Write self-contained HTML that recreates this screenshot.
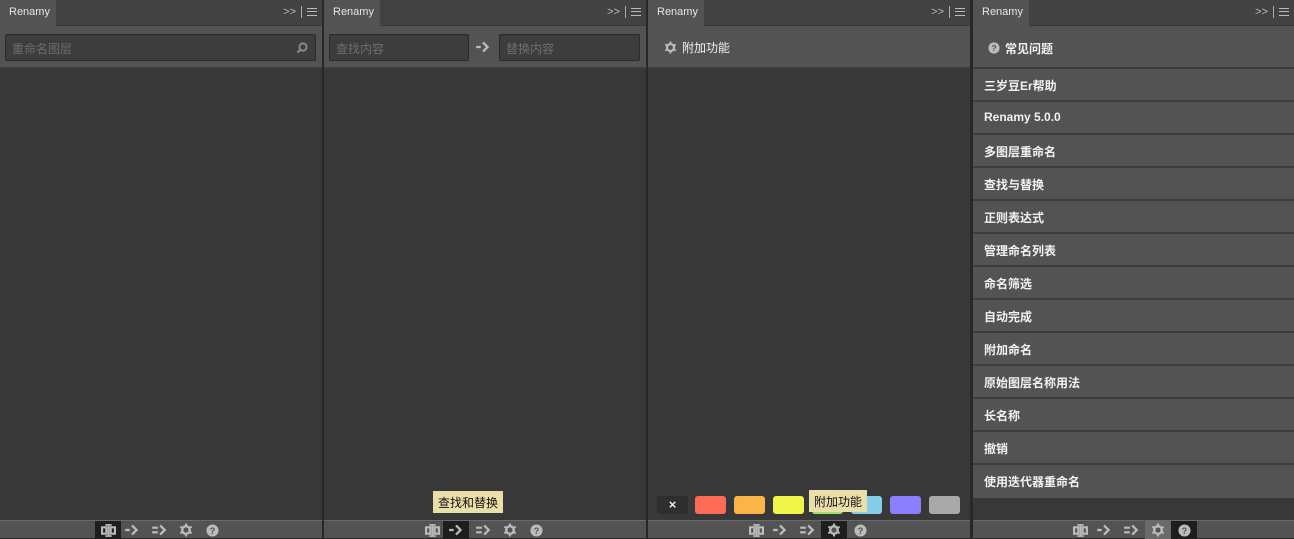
<!DOCTYPE html>
<html><head><meta charset="utf-8"><style>
*{margin:0;padding:0;box-sizing:border-box}
body{width:1294px;height:538px;background:#282828;position:relative;overflow:hidden;font-family:"Liberation Sans","Noto Sans CJK SC",sans-serif;font-size:12px;color:#ddd}
.p{position:absolute;top:0;height:538px;width:322px;background:#383838}
.tb{position:absolute;left:0;top:0;right:0;height:26px;background:#424242;border-bottom:1px solid #383838}
.tab{position:absolute;left:0;top:0;width:56px;height:27px;background:#535353;color:#e6e6e6;font-size:11px;padding:6px 0 0 9px}
.ctl{position:absolute;right:5px;top:6px;color:#bbb;font-size:11px;display:flex;align-items:center;gap:5px}
.ctl .bar{width:1px;height:12px;background:#aaa}
.mn{width:10px;height:8px;border-top:1.5px solid #bbb;border-bottom:1.5px solid #bbb;position:relative}
.mn:after{content:"";position:absolute;left:0;right:0;top:2px;border-top:1.5px solid #bbb}
.hd{position:absolute;left:0;right:0;top:26px;height:43px;background:#535353;border-bottom:2px solid #3c3c3c}
.in{position:absolute;top:8px;height:27px;background:#3d3d3d;border:1px solid #2a2a2a;border-radius:2px;color:#6e6e6e;font-size:12px;padding:5px 0 0 6px}
.bb{position:absolute;left:0;right:0;bottom:0;height:18px;background:#535353;border-top:1px solid #6a6a6a}
.ic{position:absolute;top:0;width:26px;height:18px;display:flex;align-items:center;justify-content:center}
.tip{position:absolute;background:#eadfa8;color:#111;font-size:12px;height:22px;padding:3px 5px 0}
.li{position:absolute;left:0;right:0;height:33px;background:#535353;border-bottom:2px solid #3c3c3c;color:#f2f2f2;font-weight:bold;font-size:12px;padding:8px 0 0 11px}
.sw{position:absolute;top:496px;width:31px;height:18px;border-radius:3px}
</style></head><body>

<svg width="0" height="0" style="position:absolute">
<defs>
<symbol id="ib" viewBox="0 0 14 12"><path d="M1 3h4v6H1zM9 3h4v6H9z" fill="none" stroke="#bbb" stroke-width="2"/><path d="M7 0v12M4 0.8h6M4 11.2h6" stroke="#bbb" stroke-width="1.6"/></symbol>
<symbol id="ar" viewBox="0 0 14 12"><path d="M1 6h4" stroke="#bbb" stroke-width="2"/><path d="M7 2l4 4-4 4" fill="none" stroke="#bbb" stroke-width="2"/></symbol>
<symbol id="ar2" viewBox="0 0 14 12"><path d="M1 4h5M1 8h5" stroke="#bbb" stroke-width="1.8"/><path d="M8 2l4 4-4 4" fill="none" stroke="#bbb" stroke-width="2"/></symbol>
<symbol id="gr" viewBox="0 0 14 14"><g fill="#bbb"><circle cx="7" cy="7" r="5"/><rect x="6" y="0.5" width="2" height="13"/><rect x="6" y="0.5" width="2" height="13" transform="rotate(60 7 7)"/><rect x="6" y="0.5" width="2" height="13" transform="rotate(120 7 7)"/></g><circle cx="7" cy="7" r="2.6" fill="#535353"/></symbol>
<symbol id="q" viewBox="0 0 14 14"><circle cx="7" cy="7" r="6.5" fill="#bbb"/><text x="7" y="10.5" text-anchor="middle" font-size="10" font-weight="bold" font-family="Liberation Sans" fill="#535353">?</text></symbol>
</defs></svg>

<!-- Panel 1 -->
<div class="p" style="left:0">
 <div class="tb"><div class="tab">Renamy</div><div class="ctl"><span>&gt;&gt;</span><span class="bar"></span><span class="mn"></span></div></div>
 <div class="hd"><div class="in" style="left:5px;width:311px">重命名图层<svg style="position:absolute;right:7px;top:7px" width="12" height="12" viewBox="0 0 12 12"><circle cx="7" cy="5" r="3.6" fill="none" stroke="#888" stroke-width="2"/><path d="M4.5 7.5L1.5 10.5" stroke="#888" stroke-width="2.2"/></svg></div></div>
 <div class="bb">
  <div class="ic" style="left:95px;background:#1e1e1e"><svg width="15" height="13"><use href="#ib"/></svg></div>
  <div class="ic" style="left:119px"><svg width="16" height="14"><use href="#ar"/></svg></div>
  <div class="ic" style="left:146px"><svg width="16" height="14"><use href="#ar2"/></svg></div>
  <div class="ic" style="left:173px"><svg width="14" height="14"><use href="#gr"/></svg></div>
  <div class="ic" style="left:199px"><svg width="13" height="13"><use href="#q"/></svg></div>
 </div>
</div>

<!-- Panel 2 -->
<div class="p" style="left:324px">
 <div class="tb"><div class="tab">Renamy</div><div class="ctl"><span>&gt;&gt;</span><span class="bar"></span><span class="mn"></span></div></div>
 <div class="hd"><div class="in" style="left:5px;width:140px">查找内容</div>
  <svg style="position:absolute;left:151px;top:14px" width="16" height="14"><use href="#ar"/></svg>
  <div class="in" style="left:175px;width:141px">替换内容</div></div>
 <div class="tip" style="left:109px;top:491px">查找和替换</div>
 <div class="bb">
  <div class="ic" style="left:95px"><svg width="15" height="13"><use href="#ib"/></svg></div>
  <div class="ic" style="left:119px;background:#1e1e1e"><svg width="16" height="14"><use href="#ar"/></svg></div>
  <div class="ic" style="left:146px"><svg width="16" height="14"><use href="#ar2"/></svg></div>
  <div class="ic" style="left:173px"><svg width="14" height="14"><use href="#gr"/></svg></div>
  <div class="ic" style="left:199px"><svg width="13" height="13"><use href="#q"/></svg></div>
 </div>
</div>

<!-- Panel 3 -->
<div class="p" style="left:648px">
 <div class="tb"><div class="tab">Renamy</div><div class="ctl"><span>&gt;&gt;</span><span class="bar"></span><span class="mn"></span></div></div>
 <div class="hd"><svg style="position:absolute;left:16px;top:15px" width="13" height="13"><use href="#gr"/></svg><span style="position:absolute;left:34px;top:13px;color:#f0f0f0">附加功能</span></div>
 <div class="sw" style="left:9px;background:#2e2e2e;color:#eee;text-align:center;font-size:13px;line-height:18px;font-weight:bold">×</div>
 <div class="sw" style="left:47px;background:#fd6a55"></div>
 <div class="sw" style="left:86px;background:#fdb447"></div>
 <div class="sw" style="left:125px;background:#eef546"></div>
 <div class="sw" style="left:164px;background:#9ee06d"></div>
 <div class="sw" style="left:203px;background:#84ceea"></div>
 <div class="sw" style="left:242px;background:#8c7ffe"></div>
 <div class="sw" style="left:281px;background:#a9a9a9"></div>
 <div class="tip" style="left:161px;top:490px">附加功能</div>
 <div class="bb">
  <div class="ic" style="left:95px"><svg width="15" height="13"><use href="#ib"/></svg></div>
  <div class="ic" style="left:119px"><svg width="16" height="14"><use href="#ar"/></svg></div>
  <div class="ic" style="left:146px"><svg width="16" height="14"><use href="#ar2"/></svg></div>
  <div class="ic" style="left:173px;background:#1e1e1e"><svg width="14" height="14"><use href="#gr"/></svg></div>
  <div class="ic" style="left:199px"><svg width="13" height="13"><use href="#q"/></svg></div>
 </div>
</div>

<!-- Panel 4 -->
<div class="p" style="left:973px;width:321px">
 <div class="tb"><div class="tab">Renamy</div><div class="ctl"><span>&gt;&gt;</span><span class="bar"></span><span class="mn"></span></div></div>
 <div class="hd"><svg style="position:absolute;left:15px;top:16px" width="12" height="12"><use href="#q"/></svg><span style="position:absolute;left:32px;top:14px;color:#f0f0f0;font-weight:bold">常见问题</span></div>
 <div class="li" style="top:69px">三岁豆Er帮助</div>
 <div class="li" style="top:102px">Renamy 5.0.0</div>
 <div class="li" style="top:135px">多图层重命名</div>
 <div class="li" style="top:168px">查找与替换</div>
 <div class="li" style="top:201px">正则表达式</div>
 <div class="li" style="top:234px">管理命名列表</div>
 <div class="li" style="top:267px">命名筛选</div>
 <div class="li" style="top:300px">自动完成</div>
 <div class="li" style="top:333px">附加命名</div>
 <div class="li" style="top:366px">原始图层名称用法</div>
 <div class="li" style="top:399px">长名称</div>
 <div class="li" style="top:432px">撤销</div>
 <div class="li" style="top:465px;border-bottom:none">使用迭代器重命名</div>
 <div class="bb">
  <div class="ic" style="left:94px"><svg width="15" height="13"><use href="#ib"/></svg></div>
  <div class="ic" style="left:118px"><svg width="16" height="14"><use href="#ar"/></svg></div>
  <div class="ic" style="left:145px"><svg width="16" height="14"><use href="#ar2"/></svg></div>
  <div class="ic" style="left:172px;background:#6a6a6a"><svg width="14" height="14"><use href="#gr"/></svg></div>
  <div class="ic" style="left:198px;background:#1e1e1e"><svg width="13" height="13"><use href="#q"/></svg></div>
 </div>
</div>
</body></html>
